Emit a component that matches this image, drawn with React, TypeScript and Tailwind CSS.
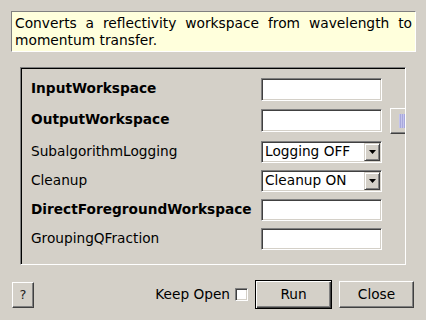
import React from "react";

const sunken =
  "border-t border-l border-t-[#808080] border-l-[#808080] border-b border-r border-b-white border-r-white shadow-[inset_1px_1px_0_#404040,inset_-1px_-1px_0_#d4d0c8]";

function TextInput({ h }: { h: string }) {
  return <div className={`w-[121px] ${h} bg-white ${sunken}`} />;
}

function Combo({ text }: { text: string }) {
  return (
    <div className={`w-[121px] h-[22px] bg-white ${sunken} flex items-stretch p-[1px]`}>
      <div className="flex-1 flex items-center pl-[2px] text-[13.7px] leading-none text-black">{text}</div>
      <div className="w-[16px] bg-[#d4d0c8] border-t border-l border-t-[#d4d0c8] border-l-[#d4d0c8] border-b border-r border-b-[#404040] border-r-[#404040] shadow-[inset_1px_1px_0_#ffffff,inset_-1px_-1px_0_#808080] flex items-center justify-center">
        <svg width="7" height="4" viewBox="0 0 7 4">
          <polygon points="0,0 7,0 3.5,4" fill="#000" />
        </svg>
      </div>
    </div>
  );
}

function Row({
  label,
  bold,
  children,
  cls,
}: {
  label: string;
  bold?: boolean;
  children: React.ReactNode;
  cls: string;
}) {
  return (
    <div className={`flex items-center ${cls}`}>
      <div className={`w-[230px] mb-[1px] text-[13.7px] leading-none text-black whitespace-nowrap ${bold ? "font-bold" : ""}`}>
        {label}
      </div>
      {children}
    </div>
  );
}

export default function App() {
  return (
    <div className="w-[426px] h-[320px] bg-[#d4d0c8] font-['DejaVu_Sans',sans-serif] overflow-hidden flex flex-col">
      <div className="ml-[11px] mt-[11px] w-[405px] h-[41px] bg-[#ffffdc] border border-t-[#808080] border-l-[#808080] border-b-white border-r-white px-[3px] pt-[3px] text-[13.8px] leading-[17px] text-black text-justify">
        Converts a reflectivity workspace from wavelength to momentum transfer.
      </div>

      <div className="ml-[20px] mt-[15px] w-[386px] h-[198px] border-t border-l border-t-[#808080] border-l-[#808080] border-b border-r border-b-white border-r-white shadow-[inset_1px_1px_0_#000000] overflow-hidden flex">
        <div className="pl-[10px] pt-[10px] flex flex-col">
          <Row label="InputWorkspace" bold cls="">
            <TextInput h="h-[23px]" />
          </Row>
          <Row label="OutputWorkspace" bold cls="mt-[8px]">
            <TextInput h="h-[23px]" />
          </Row>
          <Row label="SubalgorithmLogging" cls="mt-[9px]">
            <Combo text="Logging OFF" />
          </Row>
          <Row label="Cleanup" cls="mt-[7px]">
            <Combo text="Cleanup ON" />
          </Row>
          <Row label="DirectForegroundWorkspace" bold cls="mt-[7px]">
            <TextInput h="h-[22px]" />
          </Row>
          <Row label="GroupingQFraction" cls="mt-[7px]">
            <TextInput h="h-[22px]" />
          </Row>
        </div>
        <div className="ml-[8px] mt-[40px] shrink-0 w-[20px] h-[26px] bg-[#d4d0c8] border-t border-l border-t-white border-l-white border-b border-b-[#404040] shadow-[inset_0_-1px_0_#808080]">
          <div className="ml-[8px] mt-[5px] w-[8px] h-[14px] bg-[#c4c4ec] flex gap-[1px] px-[1px]">
            <div className="w-[1px] h-full bg-[#a8a8dc]" />
            <div className="w-[1px] h-full bg-[#a8a8dc]" />
            <div className="w-[1px] h-full bg-[#a8a8dc]" />
          </div>
        </div>
      </div>

      <div className="ml-[12px] mt-[15px] w-[402px] h-[29px] flex items-center text-[13.7px] leading-none text-black">
        <div className="w-[22px] h-[26px] bg-[#d4d0c8] border-t border-l border-t-white border-l-white border-b border-r border-b-[#404040] border-r-[#404040] shadow-[inset_-1px_-1px_0_#808080] flex items-center justify-center text-[13px] text-[#222]">
          ?
        </div>
        <div className="flex-1" />
        <span>Keep Open</span>
        <div className={`ml-[5px] w-[13px] h-[13px] bg-white ${sunken}`} />
        <div className="ml-[7px] w-[77px] h-[29px] border border-black bg-[#d4d0c8] shadow-[inset_1px_1px_0_#ffffff,inset_-1px_-1px_0_#404040,inset_-2px_-2px_0_#808080] flex items-center justify-center">
          Run
        </div>
        <div className="ml-[7px] w-[75px] h-[27px] bg-[#d4d0c8] border-t border-l border-t-white border-l-white border-b border-r border-b-[#404040] border-r-[#404040] shadow-[inset_-1px_-1px_0_#808080] flex items-center justify-center">
          Close
        </div>
      </div>
    </div>
  );
}
